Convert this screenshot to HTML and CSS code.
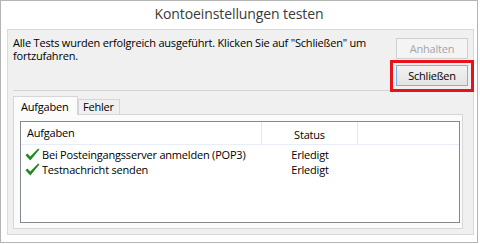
FILE: index.html
```html
<!DOCTYPE html>
<html lang="de">
<head>
    <meta charset="UTF-8">
    <title>Kontoeinstellungen testen</title>
    <link rel="stylesheet" href="styles.css">
</head>
<body>
    <div class="window">
        <div class="title">Kontoeinstellungen testen</div>

        <div class="panel">
            <div class="top">
                <p class="msg">Alle Tests wurden erfolgreich ausgeführt. Klicken Sie auf "Schließen" um fortzufahren.</p>
                <div class="actions">
                    <button class="btn" disabled>Anhalten</button>
                    <div class="marked">
                        <button class="btn primary">Schließen</button>
                        <span class="highlight"></span>
                    </div>
                </div>
            </div>
            <div class="separator"></div>

            <div class="tab-strip">
                <span class="tab active">Aufgaben</span>
                <span class="tab">Fehler</span>
            </div>
            <div class="tab-page">
                <div class="list">
                    <div class="row head">
                        <div class="col-task">Aufgaben</div>
                        <div class="col-status">Status</div>
                        <div class="col-rest"></div>
                    </div>
                    <div class="rows">
                        <div class="row">
                            <div class="col-task">
                                <svg class="check" width="15" height="13" viewBox="0 0 15 13">
                                    <path d="M0.5 7.2 L2.4 5.6 L5.2 8.6 L13.2 0.6 L14.4 1.6 L5.3 12.4 Z" fill="#1f8a24"/>
                                </svg>
                                Bei Posteingangsserver anmelden (POP3)
                            </div>
                            <div class="col-status">Erledigt</div>
                            <div class="col-rest"></div>
                        </div>
                        <div class="row">
                            <div class="col-task">
                                <svg class="check" width="15" height="13" viewBox="0 0 15 13">
                                    <path d="M0.5 7.2 L2.4 5.6 L5.2 8.6 L13.2 0.6 L14.4 1.6 L5.3 12.4 Z" fill="#1f8a24"/>
                                </svg>
                                Testnachricht senden
                            </div>
                            <div class="col-status">Erledigt</div>
                            <div class="col-rest"></div>
                        </div>
                    </div>
                </div>
            </div>
        </div>
    </div>
</body>
</html>
```

FILE: styles.css
```css
* {
    margin: 0;
    padding: 0;
    box-sizing: border-box;
}

body {
    background: #ffffff;
    font-family: 'Open Sans', 'Noto Sans', sans-serif;
    font-size: 11px;
    letter-spacing: -0.2px;
    color: #000;
}

.window {
    width: 478px;
    height: 243px;
    border: 1px solid #b4b4b4;
    background: #fff;
    display: flex;
    flex-direction: column;
}

.title {
    height: 28px;
    text-align: center;
    font-size: 14px;
    letter-spacing: -0.1px;
    line-height: 26px;
    color: #3a3a3a;
}

.panel {
    flex: 1;
    margin: 0 3px 7px 6px;
    background: #f0f0f0;
    border: 1px solid #dadada;
    display: flex;
    flex-direction: column;
}

.top {
    height: 60px;
    display: flex;
    justify-content: space-between;
}

.msg {
    width: 372px;
    padding: 6px 0 0 5px;
    line-height: 13px;
}

.actions {
    display: flex;
    flex-direction: column;
    gap: 6px;
    padding: 8px 5px 0 0;
}

.btn {
    width: 72px;
    height: 21px;
    font-family: inherit;
    font-size: 11px;
    letter-spacing: inherit;
    border: 1px solid #d0d0d0;
    background: #f4f4f4;
    color: #a6a6a6;
}

.btn.primary {
    border-color: #7db2e6;
    background: linear-gradient(#f2f2f2, #e4e4e4);
    color: #000;
}

.marked {
    position: relative;
    display: flex;
}

/* red annotation frame round the close button */
.highlight {
    position: absolute;
    left: -6px;
    top: -5px;
    right: -6px;
    bottom: -6px;
    border: 3px solid #e8121a;
}

.separator {
    height: 1px;
    margin: 0 2px 0 5px;
    background: #d3d3d3;
}

.tab-strip {
    display: flex;
    align-items: flex-end;
    margin: 4px 0 0 5px;
    height: 19px;
}

.tab {
    border: 1px solid #d6d6d6;
    border-bottom: none;
    background: #f0f0f0;
    height: 15px;
    line-height: 14px;
    padding: 0 5px 0 4px;
}

.tab.active {
    height: 19px;
    line-height: 20px;
    width: 65px;
    padding-left: 7px;
    background: #fbfbfb;
    margin-bottom: -1px;
    position: relative;
    z-index: 1;
}

.tab-page {
    height: 115px;
    margin: 0 10px 0 5px;
    border: 1px solid #d6d6d6;
    background: #fbfbfb;
    padding: 6px 2px 5px 6px;
    display: flex;
}

.list {
    flex: 1;
    border: 1px solid #828790;
    background: #fff;
}

.row {
    display: flex;
    height: 15px;
    line-height: 15px;
}

.row.head {
    height: 23px;
    line-height: 26px;
    border-bottom: 1px solid #e8eef7;
}

.head .col-task,
.head .col-status {
    border-right: 1px solid #e6e6e6;
}

.col-task {
    width: 241px;
    padding-left: 6px;
    display: flex;
    align-items: center;
    gap: 2px;
}

.row .col-task .check {
    margin-left: -2px;
}

.col-status {
    width: 96px;
    text-align: center;
}

.col-rest {
    flex: 1;
}

.rows {
    padding-top: 2px;
}
```
